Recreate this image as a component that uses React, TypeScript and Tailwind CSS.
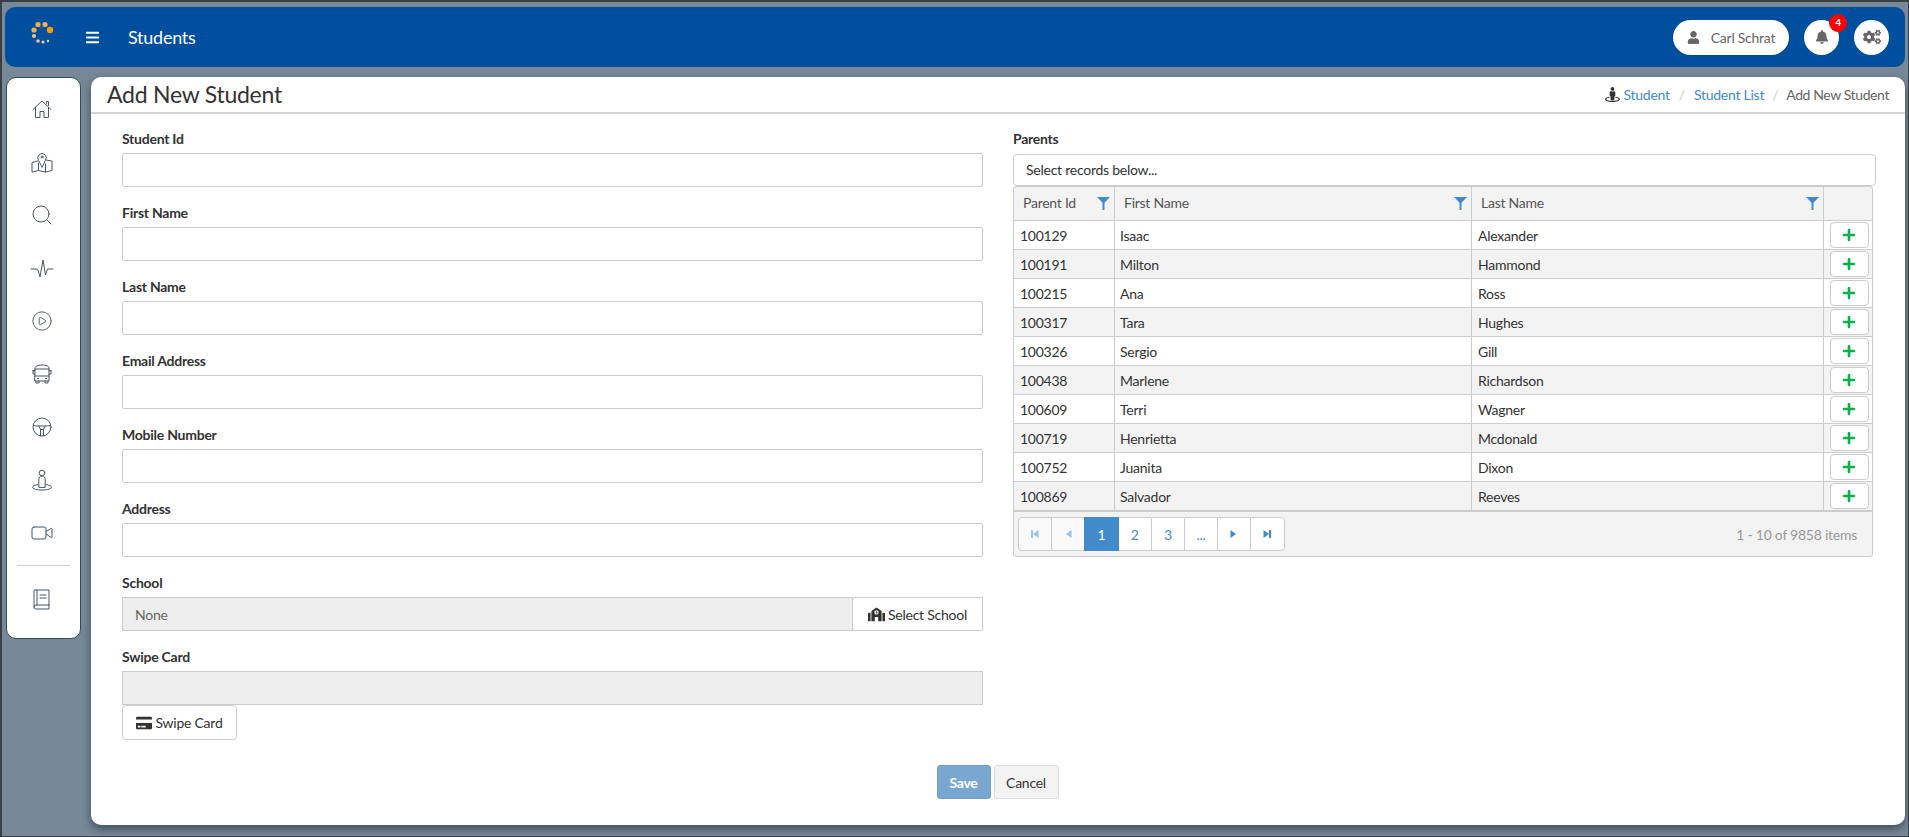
import React from "react";
import { CirclePlay, Search, Video } from "lucide-react";
import { FaBars, FaBell, FaCogs, FaCreditCard, FaPlus, FaSchool, FaStreetView, FaUser } from "react-icons/fa";

const rows = [
  ["100129", "Isaac", "Alexander"],
  ["100191", "Milton", "Hammond"],
  ["100215", "Ana", "Ross"],
  ["100317", "Tara", "Hughes"],
  ["100326", "Sergio", "Gill"],
  ["100438", "Marlene", "Richardson"],
  ["100609", "Terri", "Wagner"],
  ["100719", "Henrietta", "Mcdonald"],
  ["100752", "Juanita", "Dixon"],
  ["100869", "Salvador", "Reeves"],
];

const stroke = { fill: "none", stroke: "#4b5563", strokeWidth: 1, strokeLinecap: "round", strokeLinejoin: "round" } as const;

function Logo() {
  const dots: [number, number, number, string][] = [
    [21, 11, 3.2, "#f59e0b"], [16, 5.5, 2.6, "#f5b04a"], [9, 5.5, 2.6, "#f5b04a"], [5, 11, 2.6, "#f5b04a"],
    [5, 17, 2.1, "#f3c283"], [9, 22, 1.8, "#efc99a"], [14, 23, 1.6, "#e9d0ad"], [19, 22, 1.2, "#e9d0ad"],
  ];
  return (
    <svg width="30" height="28" viewBox="0 0 30 28" className="shrink-0 mb-[8px]">
      {dots.map(([x, y, r, c], i) => <circle key={i} cx={x} cy={y} r={r} fill={c} />)}
    </svg>
  );
}

function HomeIcon() {
  return (
    <svg width="22" height="22" viewBox="0 0 22 22" {...stroke}>
      <path d="M2 11.500 11 3l9 8.500" />
      <path d="M4.500 9.500V19.500H9V13.500H13V19.500H17.500V9.500" />
      <path d="M15.500 5.500V3.500H17.500V7.500" />
    </svg>
  );
}

function MapIcon() {
  return (
    <svg width="24" height="24" viewBox="0 0 24 24" {...stroke}>
      <path d="M7.500 11 2 12.500V22l6.500-1.500 7 1.500L22 20.500V11l-6-1" />
      <path d="M8.500 13v7.500M15.500 14v8" />
      <path d="M12 17 8.600 10.500a4.300 4.300 0 1 1 6.800 0z" fill="#fff" />
      <circle cx="12" cy="7" r="1" />
    </svg>
  );
}

function Pulse() {
  return (
    <svg width="24" height="24" viewBox="0 0 24 24" {...stroke}>
      <path d="M1 13h5l2 1 2 7 3-17 2.500 15 2-6h5.500" />
    </svg>
  );
}

function BusIcon() {
  return (
    <svg width="22" height="22" viewBox="0 0 22 22" {...stroke}>
      <path d="M4 5c0-2 3-3 7-3s7 1 7 3v13H4z" />
      <path d="M4 6h14M4 13h14" />
      <path d="M2 7.500V11h2M20 7.500V11h-2M2 7.500h2M20 7.500h-2" />
      <path d="M5 18v2h3v-2M14 18v2h3v-2" />
      <circle cx="7" cy="15.500" r=".5" />
      <circle cx="15" cy="15.500" r=".5" />
    </svg>
  );
}

function Wheel() {
  return (
    <svg width="24" height="24" viewBox="0 0 24 24" {...stroke}>
      <circle cx="12" cy="12" r="9" />
      <path d="M3.500 10.500c3 .5 4 .5 5.500 .5h6c1.500 0 2.500 0 5.500-.5" />
      <path d="M9 11l1.500 3.500V21M15 11l-1.500 3.500V21M10.500 14.500h3" />
    </svg>
  );
}

function PersonPin() {
  return (
    <svg width="24" height="24" viewBox="0 0 24 24" {...stroke}>
      <circle cx="12" cy="5" r="2.800" />
      <path d="M8.800 19v-7c0-3 1.300-4 3.200-4s3.200 1 3.200 4v7z" />
      <path d="M8 16.500c-3 .5-5.500 1.500-5.500 2.700C2.500 20.800 6.500 22 12 22s9.500-1.200 9.500-2.800c0-1.200-2.500-2.200-5.500-2.700" />
    </svg>
  );
}

function BookIcon() {
  return (
    <svg width="24" height="24" viewBox="0 0 24 24" {...stroke}>
      <path d="M5 3h14v15H6a2 2 0 0 0-2 2 2 2 0 0 0 2 2h13v-4" />
      <path d="M4 20V4a1 1 0 0 1 1-1M7 3v15M10 8h6M10 11h6" />
    </svg>
  );
}

function Funnel() {
  return (
    <svg width="13" height="14" viewBox="0 0 13 14" fill="#428bca" className="shrink-0">
      <path d="M0 1h13L7.500 6.800V14H5.500V6.800z" />
    </svg>
  );
}

function NavItem({ children, h = "h-[53px]" }: { children: React.ReactNode; h?: string }) {
  return <div className={`${h} shrink-0 flex items-center justify-center pr-[3px] text-[#4b5563]`}>{children}</div>;
}

function Field({ label, children }: { label: string; children?: React.ReactNode }) {
  return (
    <div className="flex flex-col">
      <label className="h-[27px] pt-[3px] text-[14px] leading-[20px] font-bold text-[#333]">{label}</label>
      {children ?? <div className="h-[34px] bg-white border border-[#ccc] rounded-[2px]" />}
    </div>
  );
}

function Tri({ dir, bar, op }: { dir: "l" | "r"; bar?: boolean; op?: boolean }) {
  return (
    <svg width="10" height="10" viewBox="0 0 10 10" fill="#428bca" className={op ? "opacity-50" : ""}>
      {dir === "l" ? <path d="M8.500 1v8L3 5z" /> : <path d="M1.500 1v8L7 5z" />}
      {bar && (dir === "l" ? <rect x="1" y="1" width="2" height="8" /> : <rect x="7" y="1" width="2" height="8" />)}
    </svg>
  );
}

function PageBtn({ children, active, op }: { children: React.ReactNode; active?: boolean; op?: boolean }) {
  return (
    <div className={`w-[34.200px] h-[34px] -ml-[1px] first:ml-0 first:rounded-l-[4px] last:rounded-r-[4px] flex items-center justify-center text-[14px] border ${active ? "bg-[#428bca] border-[#428bca] text-white relative" : op ? "bg-[#fafafa] border-[#ccc] text-[#428bca]" : "bg-white border-[#ccc] text-[#428bca]"}`}>
      {children}
    </div>
  );
}

function HeadCell({ label, w, filter, pl }: { label: string; w: string; filter?: boolean; pl: string }) {
  return (
    <div className={`${w} h-full shrink-0 flex items-center justify-between border-r border-[#ccc] ${pl} pr-[4px] pb-[2px] text-[14px] text-[#555]`}>
      <span>{label}</span>
      {filter && <Funnel />}
    </div>
  );
}

export default function App() {
  return (
    <div className="w-[1909px] h-[837px] overflow-hidden bg-[#778899] border-t-[2px] border-l-[2px] border-b-[1px] border-r-[1px] border-[#3a3f44] flex flex-col pt-[5px] pl-[3px] pr-[3px] text-[#333] tracking-[-0.25px]" style={{ fontFamily: '"Lato", "Open Sans", sans-serif' }}>
      <header className="h-[60px] shrink-0 bg-[#004f9e] rounded-[10px] flex items-center pl-[24px] pr-[16px] text-white">
        <Logo />
        <FaBars size={15} className="ml-[26px]" />
        <span className="ml-[28px] text-[18px]">Students</span>
        <div className="ml-auto flex items-center gap-[15px]">
          <div className="w-[116px] h-[35px] bg-white rounded-full flex items-center justify-center gap-[11px] text-[14px] text-[#666] shadow-sm">
            <FaUser size={13} />
            <span>Carl Schrat</span>
          </div>
          <div className="relative w-[35px] h-[35px] bg-white rounded-full flex items-center justify-center text-[#666]">
            <FaBell size={14} />
            <span className="absolute -top-[6px] -right-[8px] w-[18px] h-[18px] rounded-full bg-[#f00] text-white text-[10px] font-bold flex items-center justify-center">4</span>
          </div>
          <div className="w-[35px] h-[35px] bg-white rounded-full flex items-center justify-center text-[#666]">
            <FaCogs size={18} />
          </div>
        </div>
      </header>

      <div className="flex gap-[10px] mt-[10px] flex-1 min-h-0">
        <nav className="w-[75px] ml-[1px] h-[562px] shrink-0 bg-white rounded-[10px] border border-[#2f4f4f] flex flex-col pt-[4px]">
          <NavItem><HomeIcon /></NavItem>
          <NavItem><MapIcon /></NavItem>
          <NavItem><Search size={24} strokeWidth={1} /></NavItem>
          <NavItem><Pulse /></NavItem>
          <NavItem><CirclePlay size={22} strokeWidth={1} /></NavItem>
          <NavItem><BusIcon /></NavItem>
          <NavItem><Wheel /></NavItem>
          <NavItem><PersonPin /></NavItem>
          <NavItem><Video size={24} strokeWidth={1} /></NavItem>
          <div className="h-[1px] shrink-0 bg-[#ccc] mx-[10px] mt-[6px]" />
          <NavItem h="h-[66px]"><BookIcon /></NavItem>
        </nav>

        <main className="flex-1 h-[748px] bg-white rounded-[10px] shadow-[0_4px_10px_rgba(0,0,0,0.45)] flex flex-col min-w-0">
          <div className="h-[37px] shrink-0 border-b-[2px] border-[#d4d4d4] flex items-center justify-between pl-[16px] pr-[16px]">
            <h1 className="text-[23px] text-[#333] leading-none">Add New Student</h1>
            <div className="flex items-center text-[14px] text-[#666]">
              <FaStreetView size={15} className="text-[#333] mr-[3px]" />
              <span className="text-[#428bca]">Student</span>
              <span className="mx-[9px] text-[#ccc]">/</span>
              <span className="text-[#428bca]">Student List</span>
              <span className="mx-[8px] text-[#ccc]">/</span>
              <span className="tracking-[-0.4px]">Add New Student</span>
            </div>
          </div>

          <div className="pl-[31px] pr-[28px] pt-[13px]">
            <div className="flex gap-[30px]">
              <div className="w-[861px] shrink-0 flex flex-col gap-[13px] -mt-[1px]">
                <Field label="Student Id" />
                <Field label="First Name" />
                <Field label="Last Name" />
                <Field label="Email Address" />
                <Field label="Mobile Number" />
                <Field label="Address" />
                <Field label="School">
                  <div className="h-[34px] flex">
                    <div className="flex-1 bg-[#eee] border border-[#ccc] pl-[12px] flex items-center text-[14px] text-[#666]">None</div>
                    <div className="w-[131px] bg-white border border-[#ccc] -ml-[1px] rounded-l-[3px] flex items-center justify-center gap-[3px] text-[14px] text-[#333]">
                      <FaSchool size={17} />
                      <span>Select School</span>
                    </div>
                  </div>
                </Field>
                <Field label="Swipe Card">
                  <div className="h-[34px] bg-[#eee] border border-[#ccc]" />
                  <div className="w-[115px] h-[35px] bg-white border border-[#ccc] rounded-[4px] flex items-center justify-center gap-[3px] text-[14px] text-[#333]">
                    <FaCreditCard size={16} />
                    <span>Swipe Card</span>
                  </div>
                </Field>
              </div>

              <div className="w-[863px] shrink-0">
                <label className="block h-[27px] pt-[2px] text-[14px] leading-[20px] font-bold text-[#333]">Parents</label>
                <div className="h-[32px] border border-[#ccc] rounded-[4px] pl-[12px] pb-[1px] flex items-center text-[14px] text-[#333]">Select records below...</div>
                <div className="w-[860px] border border-[#ccc] rounded-[3px] bg-[#f3f3f3] h-[371px] flex flex-col">
                  <div className="h-[34px] shrink-0 flex items-center border-b border-[#ccc]">
                    <HeadCell label="Parent Id" w="w-[101px]" filter pl="pl-[9px]" />
                    <HeadCell label="First Name" w="w-[357px]" filter pl="pl-[9px]" />
                    <HeadCell label="Last Name" w="w-[352px]" filter pl="pl-[9px]" />
                  </div>
                  {rows.map((r, i) => (
                    <div key={r[0]} className={`h-[29px] shrink-0 flex items-center border-b border-[#ccc] text-[14px] text-[#333] ${i % 2 ? "bg-[#f3f3f3]" : "bg-white"}`}>
                      <div className="w-[101px] h-full shrink-0 flex items-center pl-[6px] border-r border-[#ccc]">{r[0]}</div>
                      <div className="w-[357px] h-full shrink-0 flex items-center pl-[5px] border-r border-[#ccc]">{r[1]}</div>
                      <div className="w-[352px] h-full shrink-0 flex items-center pl-[6px] border-r border-[#ccc]">{r[2]}</div>
                      <div className="flex-1 flex items-center justify-center pl-[2px]">
                        <div className="w-[39px] h-[26px] bg-white border border-[#ccc] rounded-[4px] flex items-center justify-center text-[#0ab14b]">
                          <FaPlus size={14} />
                        </div>
                      </div>
                    </div>
                  ))}
                  <div className="flex-1 flex items-center justify-between pl-[4px] pr-[15px] border-t border-[#ccc]">
                    <div className="flex">
                      <PageBtn op><Tri dir="l" bar op /></PageBtn>
                      <PageBtn op><Tri dir="l" op /></PageBtn>
                      <PageBtn active>1</PageBtn>
                      <PageBtn>2</PageBtn>
                      <PageBtn>3</PageBtn>
                      <PageBtn>...</PageBtn>
                      <PageBtn><Tri dir="r" /></PageBtn>
                      <PageBtn><Tri dir="r" bar /></PageBtn>
                    </div>
                    <span className="text-[14px] text-[#999]">1 - 10 of 9858 items</span>
                  </div>
                </div>
              </div>
            </div>

            <div className="flex justify-center gap-[3px] mt-[25px] -ml-[4px]">
              <div className="w-[54px] h-[34px] bg-[#7aa7cf] border border-[#6f9ec8] rounded-[3px] flex items-center justify-center text-[14px] font-bold text-white">Save</div>
              <div className="w-[65px] h-[34px] bg-[#f3f3f3] border border-[#ddd] rounded-[3px] flex items-center justify-center text-[14px] text-[#333]">Cancel</div>
            </div>
          </div>
        </main>
      </div>
    </div>
  );
}
